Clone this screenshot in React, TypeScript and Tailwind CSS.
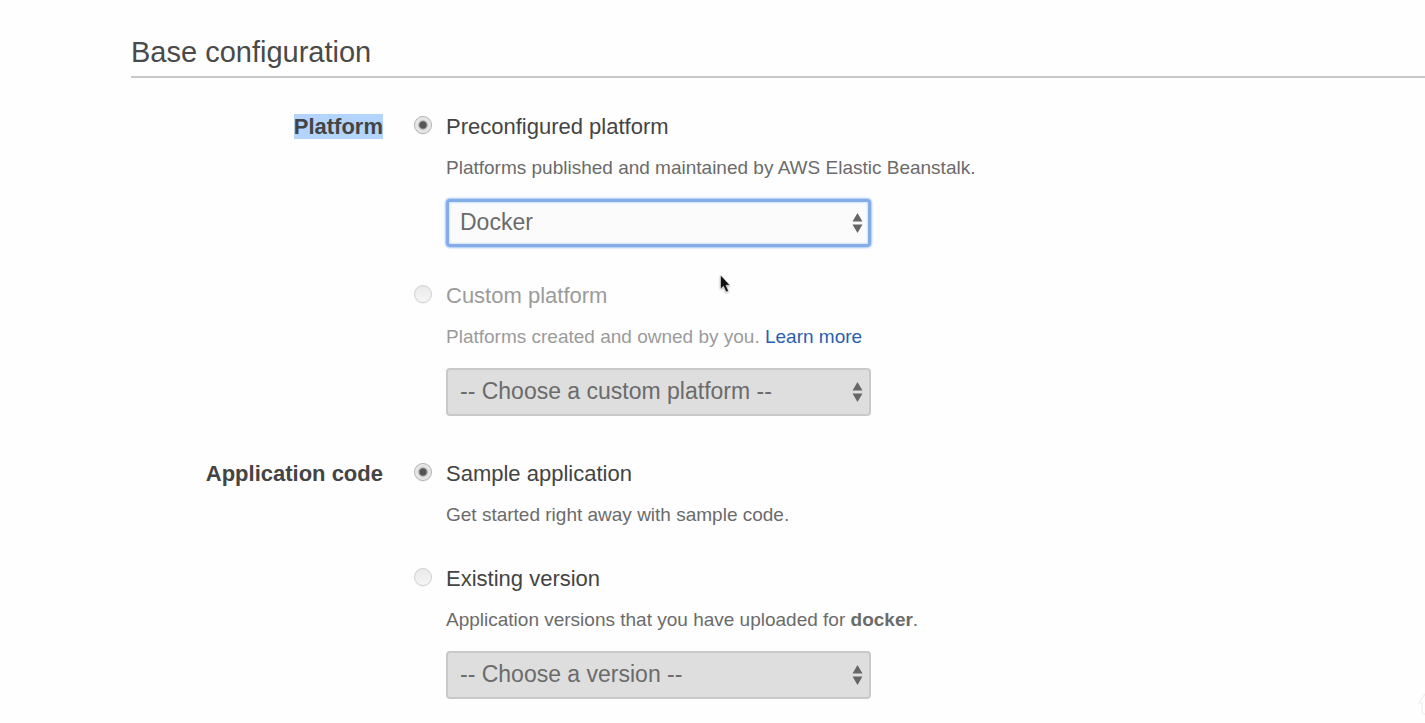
import { useState, type ReactNode } from "react";

type OptionProps = {
  id: string;
  name: string;
  title: string;
  description: ReactNode;
  checked: boolean;
  disabled?: boolean;
  onSelect?: () => void;
  children?: ReactNode;
};

function RadioOption({ id, name, title, description, checked, disabled, onSelect, children }: OptionProps) {
  return (
    <div className="grid grid-cols-[32px_1fr]">
      <input
        type="radio"
        id={id}
        name={name}
        checked={checked}
        disabled={disabled}
        onChange={onSelect}
        className="mt-[3px] size-[18px] appearance-none rounded-full border border-[#d0d0d0] bg-linear-to-b from-[#e9e9e9] to-[#f6f6f6] shadow-[0_1px_1px_rgba(0,0,0,0.06)] checked:border-[#b0b0b0] checked:bg-[radial-gradient(circle,#555_0,#555_3px,#dedede_5px,#ededed_8px)]"
      />
      <div>
        <label htmlFor={id} className={`block text-[22px] leading-7 ${disabled ? "text-[#9b9b9b]" : "text-[#444]"}`}>
          {title}
        </label>
        <p className={`mt-[15px] text-[19px] leading-6 ${disabled ? "text-[#9b9b9b]" : "text-[#6b6b6b]"}`}>
          {description}
        </p>
        {children}
      </div>
    </div>
  );
}

function SelectBox({ label, options, active }: { label: string; options: string[]; active?: boolean }) {
  return (
    <div className="relative mt-[19px] w-full max-w-[425px]">
      <select
        aria-label={label}
        disabled={!active}
        className={`block h-12 w-full appearance-none rounded pr-10 pb-0.5 text-[23px] leading-7 text-[#6b6b6b] opacity-100 outline-none ${
          active
            ? "border-[3px] border-[#84ade8] bg-[#fbfbfb] pl-[11px] shadow-[0_0_2px_1px_#a3c7f7,inset_0_0_2px_1px_#cfe2fb]"
            : "border-2 border-[#c9c9c9] bg-[#dedede] pl-3"
        }`}
      >
        {options.map((option) => (
          <option key={option}>{option}</option>
        ))}
      </select>
      <svg
        className="pointer-events-none absolute top-3.5 right-2 h-5 w-[11px]"
        viewBox="0 0 11 20"
        fill="#666"
        aria-hidden="true"
      >
        <path d="M5.5 0 10.5 8.5H0.5Z" />
        <path d="M5.5 20 10.5 11.5H0.5Z" />
      </svg>
    </div>
  );
}

function FormRow({ label, children }: { label: ReactNode; children: ReactNode }) {
  return (
    <div role="group" className="grid grid-cols-[252px_1fr] gap-x-[31px]">
      <div className="text-right text-[22px] leading-7 font-bold text-[#444]">{label}</div>
      <div>{children}</div>
    </div>
  );
}

export default function App() {
  const [source, setSource] = useState("sample");

  return (
    <main className="relative min-h-screen overflow-hidden bg-[#fefefe] pl-[131px] font-['Liberation_Sans',Arial,sans-serif]">
      <h1 className="border-b-2 border-[#c8c8c8] pt-9 pb-2 text-[29px] leading-8 text-[#4a4a4a]">Base configuration</h1>

      <form className="flex flex-col gap-11 pt-[35px]">
        <FormRow label={<span className="bg-[#b3d5fd]">Platform</span>}>
          <div className="flex flex-col gap-[35px]">
            <RadioOption
              id="preconfigured"
              name="platform"
              title="Preconfigured platform"
              description="Platforms published and maintained by AWS Elastic Beanstalk."
              checked
              onSelect={() => undefined}
            >
              <SelectBox label="Preconfigured platform" options={["Docker"]} active />
            </RadioOption>
            <RadioOption
              id="custom"
              name="platform"
              title="Custom platform"
              description={
                <>
                  Platforms created and owned by you.{" "}
                  <a href="#learn-more" className="text-[#2b5eb0]">
                    Learn more
                  </a>
                </>
              }
              checked={false}
              disabled
            >
              <SelectBox label="Custom platform" options={["-- Choose a custom platform --"]} />
            </RadioOption>
          </div>
        </FormRow>

        <FormRow label="Application code">
          <div className="flex flex-col gap-[38px]">
            <RadioOption
              id="sample"
              name="code"
              title="Sample application"
              description="Get started right away with sample code."
              checked={source === "sample"}
              onSelect={() => setSource("sample")}
            />
            <RadioOption
              id="existing"
              name="code"
              title="Existing version"
              description={
                <>
                  Application versions that you have uploaded for <b>docker</b>.
                </>
              }
              checked={source === "existing"}
              onSelect={() => setSource("existing")}
            >
              <SelectBox label="Version" options={["-- Choose a version --"]} />
            </RadioOption>
          </div>
        </FormRow>
      </form>

      <svg
        className="pointer-events-none absolute top-[274px] left-[719px] h-[22px] w-[14px] drop-shadow-[0_1px_1px_rgba(0,0,0,0.3)]"
        viewBox="0 0 14 22"
        aria-hidden="true"
      >
        <path d="M1.5 1V15L4.5 12.2 7 18 9.5 17 7 11.3H11Z" fill="#111" stroke="#fff" strokeWidth="0.5" />
      </svg>
      <svg
        className="pointer-events-none absolute right-0 bottom-0 h-8 w-2"
        viewBox="0 0 8 32"
        fill="none"
        stroke="#f1f1f1"
        strokeWidth="1.5"
        aria-hidden="true"
      >
        <path d="M8 3 2 12H5V20Q5 23 8 23" />
      </svg>
    </main>
  );
}
